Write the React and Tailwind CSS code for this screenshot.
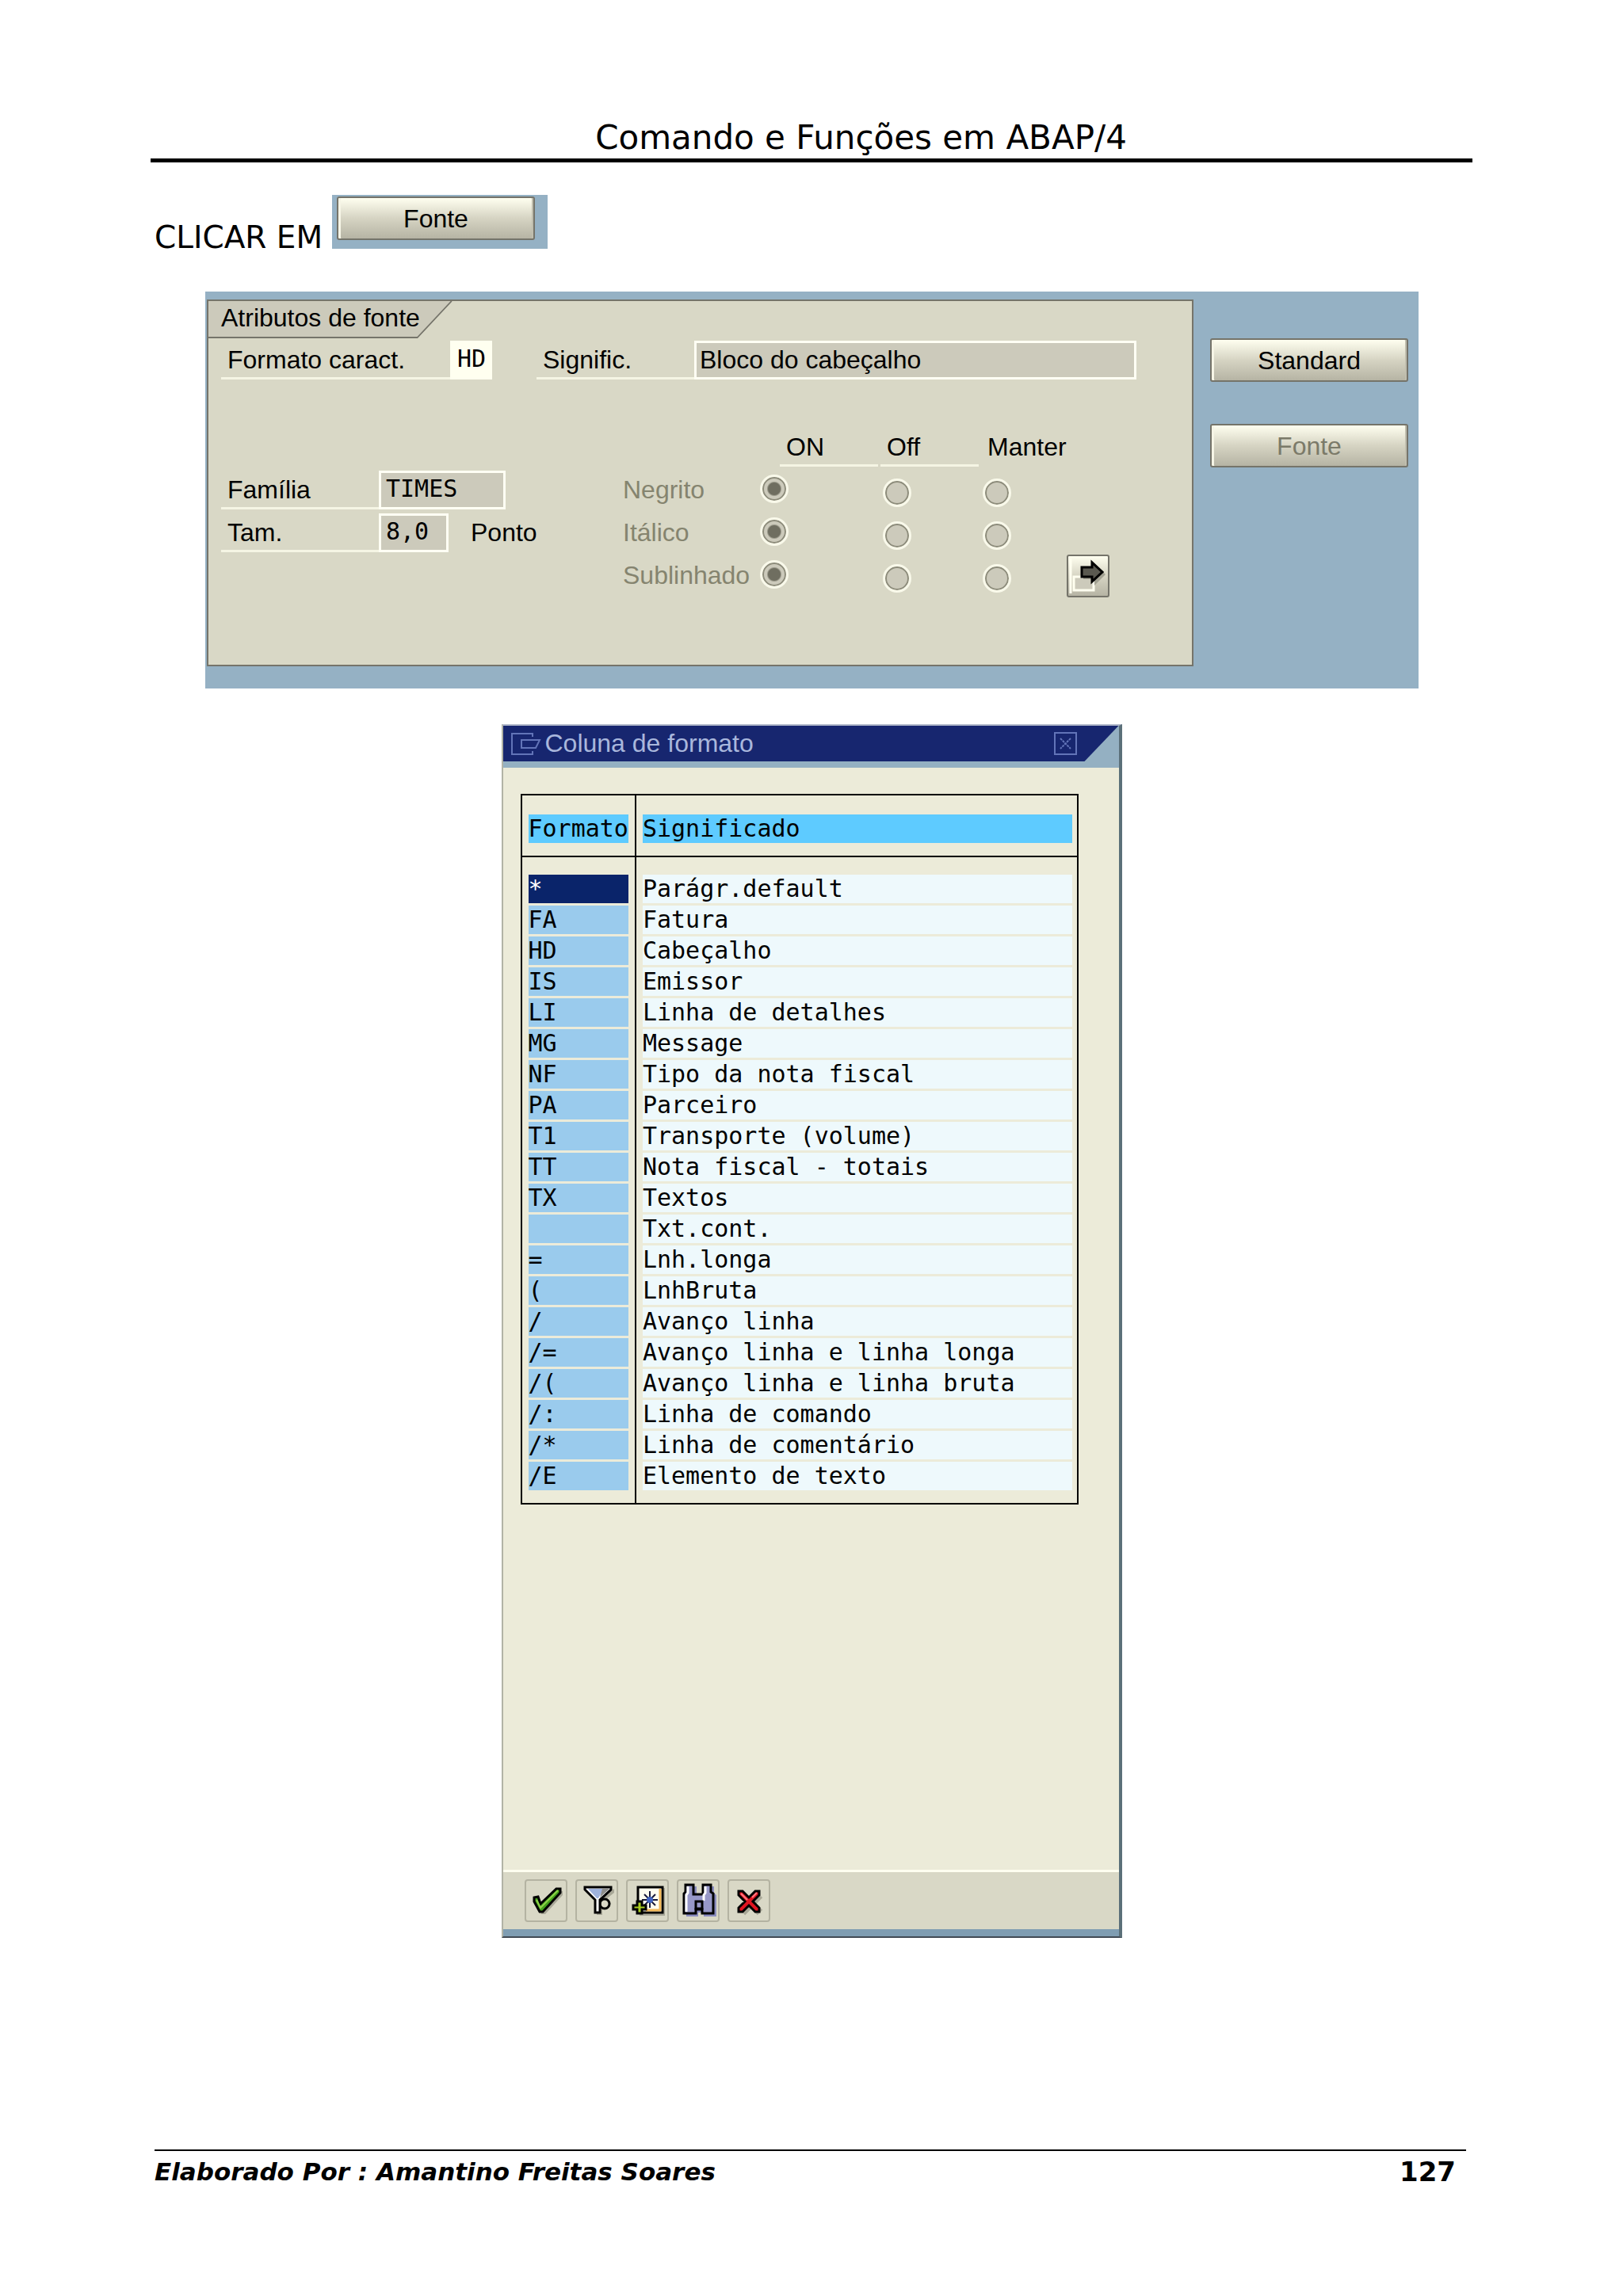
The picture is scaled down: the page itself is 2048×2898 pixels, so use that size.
import React from "react";

const formatos = [
  ["*", "Parágr.default"],
  ["FA", "Fatura"],
  ["HD", "Cabeçalho"],
  ["IS", "Emissor"],
  ["LI", "Linha de detalhes"],
  ["MG", "Message"],
  ["NF", "Tipo da nota fiscal"],
  ["PA", "Parceiro"],
  ["T1", "Transporte (volume)"],
  ["TT", "Nota fiscal - totais"],
  ["TX", "Textos"],
  ["", "Txt.cont."],
  ["=", "Lnh.longa"],
  ["(", "LnhBruta"],
  ["/", "Avanço linha"],
  ["/=", "Avanço linha e linha longa"],
  ["/(", "Avanço linha e linha bruta"],
  ["/:", "Linha de comando"],
  ["/*", "Linha de comentário"],
  ["/E", "Elemento de texto"],
];

const estilos = ["Negrito", "Itálico", "Sublinhado"];

const Button = ({ children, disabled }) => (
  <button
    disabled={disabled}
    className="h-[55px] w-[250px] shrink-0 rounded-[3px] border-2 border-[#75746a] bg-linear-to-b from-[#fffff0] via-[#d6d4c3] to-[#b6b4a4] text-[32px] text-black shadow-[inset_3px_0_#f6f5e6,inset_-2px_0_#c0beae] disabled:text-[#7b7a69]"
  >
    {children}
  </button>
);

const Label = ({ children, htmlFor, className }) => (
  <label
    htmlFor={htmlFor}
    className={`shrink-0 pl-2 leading-[49px] shadow-[inset_0_-3px_#f5f5e4] ${className}`}
  >
    {children}
  </label>
);

const Radio = ({ name, label, checked, className }) => (
  <input
    type="radio"
    name={name}
    aria-label={label}
    defaultChecked={checked}
    disabled
    className={`size-[36px] appearance-none rounded-full border-[3px] border-[#f9f9ea] bg-[#cccabb] shadow-[inset_0_0_0_2px_#8d8c7b] checked:bg-radial checked:from-[#6f6e60] checked:from-35% checked:to-[#cccabb] checked:to-45% ${className}`}
  />
);

const IconButton = ({ label, children }) => (
  <button
    aria-label={label}
    className="size-[54px] rounded-[4px] border-2 border-[#b4b3a2] bg-[#d9d8c6]"
  >
    <svg viewBox="2 2 50 50" className="size-full" fill="none">
      {children}
    </svg>
  </button>
);

const AtributosDeFonte = () => (
  <section className="mr-[68px] ml-[69px] mt-[54px] flex h-[501px] bg-[#95b1c4] pt-[10px] pr-[13px] pl-[2px] text-[32px]">
    <div className="mr-[21px] h-[463px] flex-1 border-2 border-[#75746a] bg-[#d9d8c6]">
      <div className="relative h-[47px] w-[308px] bg-[#cccabb] pl-4 leading-[43px] [clip-path:polygon(0_0,100%_0,264px_100%,0_100%)]">
        Atributos de fonte
        <svg
          viewBox="0 0 308 47"
          className="absolute inset-0 h-[47px] w-[308px]"
          fill="none"
          stroke="#75746a"
          strokeWidth="2"
        >
          <path d="M0 46H264L307 0" />
        </svg>
      </div>

      <div className="mt-[3px] flex pr-[70px] pl-4">
        <Label htmlFor="formato" className="w-[289px]">
          Formato caract.
        </Label>
        <input
          id="formato"
          defaultValue="HD"
          className="h-[49px] w-[53px] bg-[#fffff0] pb-1 pl-[9px] font-['DejaVu_Sans_Mono',monospace] text-[30px]"
        />
        <Label htmlFor="signific" className="ml-[56px] w-[199px]">
          Signific.
        </Label>
        <input
          id="signific"
          readOnly
          value="Bloco do cabeçalho"
          className="h-[49px] min-w-0 flex-1 border-[3px] border-[#fffff4] bg-[#cccabb] pl-1"
        />
      </div>

      <div className="mt-[60px] flex pl-4">
        <div className="flex w-[507px] shrink-0 flex-col gap-[5px] pt-[55px]">
          <div className="flex">
            <Label htmlFor="familia" className="w-[199px]">
              Família
            </Label>
            <input
              id="familia"
              readOnly
              value="TIMES"
              className="h-[49px] w-[160px] border-[3px] border-[#fffff4] bg-[#cccabb] pb-1 pl-[6px] font-['DejaVu_Sans_Mono',monospace] text-[30px]"
            />
          </div>
          <div className="flex">
            <Label htmlFor="tam" className="w-[199px]">
              Tam.
            </Label>
            <input
              id="tam"
              readOnly
              value="8,0"
              className="h-[49px] w-[88px] border-[3px] border-[#fffff4] bg-[#cccabb] pb-1 pl-[6px] font-['DejaVu_Sans_Mono',monospace] text-[30px]"
            />
            <span className="pl-[28px] leading-[49px]">Ponto</span>
          </div>
        </div>

        <div className="flex shrink-0 flex-col gap-[5px]">
          <div className="flex gap-[3px] pl-[198px] leading-[50px]">
            <span className="w-[124px] pl-2 shadow-[inset_0_-3px_#f5f5e4]">
              ON
            </span>
            <span className="w-[124px] pl-2 shadow-[inset_0_-3px_#f5f5e4]">
              Off
            </span>
            <span className="pl-2">Manter</span>
          </div>
          {estilos.map((estilo) => (
            <div
              key={estilo}
              className="grid h-[49px] grid-cols-[173px_155px_126px_36px] leading-[49px] text-[#85846f]"
            >
              <span>{estilo}</span>
              <Radio
                name={estilo}
                label={`${estilo} ON`}
                checked
                className="mt-[5px]"
              />
              <Radio
                name={estilo}
                label={`${estilo} Off`}
                className="mt-[10px]"
              />
              <Radio
                name={estilo}
                label={`${estilo} Manter`}
                className="mt-[10px]"
              />
            </div>
          ))}
        </div>

        <button
          aria-label="Mais atributos"
          className="mt-[161px] size-[54px] shrink-0 rounded-[3px] border-2 border-[#75746a] bg-linear-to-b from-[#fffff0] via-[#d6d4c3] to-[#b6b4a4]"
        >
          <svg viewBox="2 2 50 50" className="size-full" fill="none">
            <path d="M5 5V49" stroke="#fffff0" strokeWidth="3" />
            <path d="M9 28H34V45H9Z" fill="#cccabb" stroke="#fffff0" strokeWidth="3" />
            <path d="M21 18H35V11L49 25L35 39V31H21Z" fill="#a3a293" />
            <path
              d="M19 16H32V10L45 22L32 34V28H19Z"
              fill="#5a5950"
              stroke="#000"
              strokeWidth="3"
            />
          </svg>
        </button>
      </div>
    </div>

    <div className="flex flex-col gap-[53px] pt-[49px]">
      <Button>Standard</Button>
      <Button disabled>Fonte</Button>
    </div>
  </section>
);

const ColunaDeFormato = () => (
  <section className="mx-auto mt-[45px] flex h-[1532px] w-[783px] flex-col border-t-2 border-r-4 border-b-2 border-l-2 border-t-[#b3bacb] border-r-[#5b7079] border-b-[#414a54] border-l-[#b2b3a6] bg-[#ecebd9]">
    <header className="bg-[#94b0c2] pb-[8px]">
      <div className="flex h-[45px] items-center bg-[#17266f] pr-[53px] pl-[9px] [clip-path:polygon(0_0,100%_0,calc(100%-43px)_100%,0_100%)]">
        <svg
          viewBox="0 0 40 30"
          className="mr-1 h-[30px] w-[40px]"
          fill="none"
          stroke="#6274b8"
          strokeWidth="2"
        >
          <path d="M28 6V2H2V28H28V24" />
          <path d="M14 10H37L32 20H14Z" />
        </svg>
        <h2 className="flex-1 text-[32px] leading-[45px] text-[#a9b7dc]">
          Coluna de formato
        </h2>
        <button aria-label="Fechar">
          <svg
            viewBox="0 0 29 29"
            className="size-[29px]"
            fill="none"
            stroke="#6274b8"
            strokeWidth="2"
          >
            <path d="M1 1H28V28H1Z" />
            <path d="M8 8L21 21M21 8L8 21" strokeDasharray="3 1" />
          </svg>
        </button>
      </div>
    </header>

    <div className="flex-1 pt-[33px] pl-[22px]">
      <table className="w-[704px] border-collapse border-2 border-black text-left font-['DejaVu_Sans_Mono',monospace] text-[30px] leading-[36px]">
        <thead>
          <tr className="border-b-2 border-black">
            <th className="w-[144px] border-r-2 border-black pt-[24px] pr-[8px] pb-[16px] pl-[8px] font-normal">
              <div className="bg-[#5ecbff]">Formato</div>
            </th>
            <th className="pt-[24px] pr-[6px] pb-[16px] pl-[8px] font-normal">
              <div className="bg-[#5ecbff]">Significado</div>
            </th>
          </tr>
        </thead>
        <tbody>
          {formatos.map(([formato, significado], i) => (
            <tr
              key={significado}
              className="*:pb-[3px] first:*:pt-[22px] last:*:pb-[16px]"
            >
              <td className="border-r-2 border-black px-[8px]">
                <div
                  className={
                    i === 0
                      ? "h-[36px] bg-[#0a246a] text-white"
                      : "h-[36px] bg-[#9acbed]"
                  }
                >
                  {formato}
                </div>
              </td>
              <td className="pr-[6px] pl-[8px]">
                <div className="h-[36px] bg-[#eef9fc]">{significado}</div>
              </td>
            </tr>
          ))}
        </tbody>
      </table>
    </div>

    <footer className="flex gap-[10px] border-t-[3px] border-b-[9px] border-t-[#fffff0] border-b-[#7f9db2] bg-[#d9d8c6] py-[9px] pl-[27px]">
      <IconButton label="Confirmar">
        <path d="M14 25L19 24L23 33L43 14L48 15L48 20L26 44L21 44L14 31Z" fill="#a9a898" />
        <path
          d="M12 23L17 22L20 31L40 12L45 12V17L23 41H19L12 28Z"
          fill="#43a01c"
          stroke="#000"
          strokeWidth="3"
        />
        <path d="M15 26L20 36L42 14" stroke="#8fd04a" strokeWidth="2" />
      </IconButton>
      <IconButton label="Filtrar">
        <path d="M34 45H27V28L49 12V17L40 24L45 30L40 37L34 38Z" fill="#a9a898" />
        <circle cx="37" cy="31" r="6" fill="#d9d8c6" stroke="#000" strokeWidth="3" />
        <path
          d="M12 10H45V13L31 26V42H25V26L12 13Z"
          fill="#fff"
          stroke="#000"
          strokeWidth="3"
        />
        <path d="M16 12H36L29 24H27Z" fill="#9fb3dd" />
        <path d="M34 12H43L31 23Z" fill="#8f8f8c" />
      </IconButton>
      <IconButton label="Novo filtro">
        <path d="M17 11H49V46H17Z" fill="#a9a898" />
        <path d="M15 10H46V42H15Z" fill="#fffdf0" stroke="#000" strokeWidth="3" />
        <path d="M43 12V39H25" stroke="#f3b95a" strokeWidth="3" />
        <path
          d="M30 15V36M20 26H40M23 19L37 33M37 19L23 33"
          stroke="#1a1a3a"
          strokeWidth="2"
        />
        <circle cx="30" cy="26" r="4" fill="#3f62c0" />
        <path
          d="M14 28H20V33H25V38H20V43H14V38H9V33H14Z"
          fill="#a8cc20"
          stroke="#000"
          strokeWidth="3"
        />
      </IconButton>
      <IconButton label="Procurar">
        <path d="M14 9H25V20H36V9H47V17L50 20V47H34V42H27V47H12V20Z" fill="#8b8dc0" />
        <path
          d="M11 7H21V19H33V7H43V16L46 18V43H32V38H24V43H9V18L11 16Z"
          fill="#9798c8"
          stroke="#000"
          strokeWidth="3"
        />
        <path d="M14 9V17L12 20V41M36 9V17L34 20V27" stroke="#fff" strokeWidth="3" />
        <path d="M24 28H32V37H24Z" fill="#9798c8" stroke="#000" strokeWidth="3" />
      </IconButton>
      <IconButton label="Cancelar">
        <path d="M19 20L41 42M41 20L19 42" stroke="#a9a898" strokeWidth="9" />
        <path
          d="M14 15H19L27 23L35 15H40V20L32 28L40 36V41H35L27 33L19 41H14V36L22 28L14 20Z"
          fill="#df1420"
          stroke="#000"
          strokeWidth="3"
        />
        <path d="M17 18L25 26M31 23L37 17" stroke="#ff7a80" strokeWidth="2" />
      </IconButton>
    </footer>
  </section>
);

const App = () => {
  return (
    <div className="bg-white px-[190px] pt-[148px] pb-[130px] font-['Liberation_Sans',Arial,sans-serif] text-black">
      <header className="border-b-[5px] border-black pl-[125px] text-center">
        <h1 className="font-['DejaVu_Sans',Verdana,sans-serif] text-[42px] leading-[52px]">
          Comando e Funções em ABAP/4
        </h1>
      </header>

      <main>
        <div className="mt-[41px] flex items-end pl-[5px]">
          <p className="w-[224px] font-['DejaVu_Sans',Verdana,sans-serif] text-[39px] leading-[28px]">
            CLICAR EM
          </p>
          <div className="h-[68px] w-[272px] bg-[#95b1c4] pt-[2px] pl-[6px]">
            <Button>Fonte</Button>
          </div>
        </div>
        <AtributosDeFonte />
        <ColunaDeFormato />
      </main>

      <footer className="mt-[267px] mr-[8px] ml-[5px] flex justify-between border-t-2 border-black pt-[6px] pr-[13px] font-['DejaVu_Sans',Verdana,sans-serif] font-bold leading-[40px]">
        <p className="text-[31px] italic">Elaborado Por : Amantino Freitas Soares</p>
        <p className="text-[34px]">127</p>
      </footer>
    </div>
  );
};

export default App;
